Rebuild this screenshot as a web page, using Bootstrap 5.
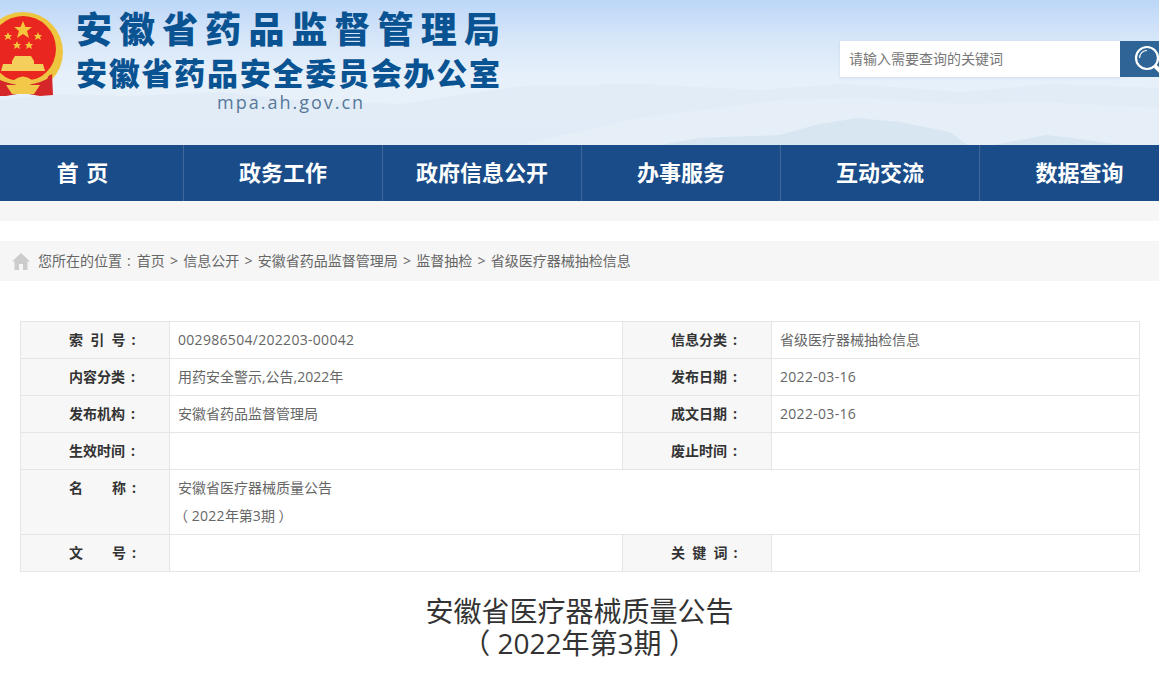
<!DOCTYPE html>
<html lang="zh-CN">
<head>
    <meta charset="UTF-8">
    <meta name="viewport" content="width=device-width, initial-scale=1.0">
    <title>安徽省医疗器械质量公告</title>
    <link href="https://cdn.jsdelivr.net/npm/bootstrap@5.3.0/dist/css/bootstrap.min.css" rel="stylesheet">
    <style>
        html, body { overflow: hidden; height: 675px; }
        body { font-family: "Open Sans", "Noto Sans CJK SC", sans-serif; font-size: 14px; color: #666; background: #fff; }
        .top-head { height: 145px; position: relative; overflow: hidden; background: linear-gradient(180deg, #bcd6f8 0, #d5e5f9 35px, #e6f0fa 75px, #e8f1f9 100px, #e4eef8 145px); }
        .top-hills { position: absolute; left: 0; top: 0; }
        .top-inner { position: relative; height: 145px; }
        .emblem { flex: 0 0 auto; margin-left: -22px; margin-top: 10px; }
        .site-titles { margin-left: 13px; width: 440px; }
        .title-a, .title-b { font-family: "Noto Sans CJK SC", sans-serif; font-weight: 900; color: #0a5392; white-space: nowrap; }
        .title-a { font-size: 36px; letter-spacing: 7.1px; line-height: 40px; margin-top: 7px; }
        .title-b { font-size: 31px; letter-spacing: 1.75px; line-height: 40px; margin-top: 5px; }
        .site-url { font-family: "Open Sans", sans-serif; font-size: 18px; letter-spacing: 2px; line-height: 22px; color: #56789a; margin: -1px 0 0 141px; }
        .search-box { margin: 41px 0 0 auto; width: 319px; height: 36px; flex: 0 0 auto; }
        .search-text { width: 280px; height: 36px; background: #fff; padding-left: 9px; line-height: 36px; color: #777; box-shadow: 0 1px 3px rgba(120,150,190,.2); }
        .search-btn { width: 39px; height: 36px; background: #2f6496; overflow: hidden; }
        .main-nav { background: #1a4c89; height: 56px; margin-left: -15px; width: 1200px; }
        .main-nav a { width: 199px; height: 56px; line-height: 52px; text-align: center; color: #fff; font-family: "Noto Sans CJK SC", sans-serif; font-size: 22px; font-weight: 700; word-spacing: 2.5px; text-decoration: none; border-right: 1px solid #3f6899; }
        .main-nav a:first-child { padding-right: 3px; }
        .main-nav a:last-child { border-right: 0; }
        .strip { height: 20px; background: #f6f6f6; }
        .crumb-bar { height: 40px; margin-top: 20px; background: #f6f6f6; padding: 0 0 0 12px; line-height: 38px; }
        .crumb-bar svg { margin: 0 8px 0 0; }
        .crumb-bar i { font-style: normal; margin: 0 5.25px; }
        .crumb-bar .colon-mark { margin: 0 6px 0 5px; }
        .info-wrap { margin: 40px 20px 0 20px; }
        .info-table { table-layout: fixed; width: 1119px; margin: 0; border-color: #e5e5e5; --bs-table-color: #666; font-size: 14px; }
        .info-table td { padding: 0 8px; height: 37px; vertical-align: middle; line-height: 28px; border-color: #e5e5e5; }
        .info-table td.lab { background: #f7f7f7; color: #333; font-weight: 700; padding: 0 0 0 48px; white-space: pre; --bs-table-bg: #f7f7f7; }
        .info-table td.lab .colon-mark { margin-left: 6px; }
        .info-table tr.tall td { height: 65px; }
        .info-table tr.tall td.lab { vertical-align: top; padding-top: 4px; }
        .paren-in { margin-left: -4px; }
        .num { letter-spacing: .3px; }
        .doc-title { margin: 23px 0 0; text-align: center; font-size: 28px; line-height: 32px; font-weight: 400; color: #333; }
    </style>
</head>
<body>
    <div class="top-head">
        <svg class="top-hills" width="1159" height="145" viewBox="0 0 1159 145">
            <path d="M0 100 L60 94 L130 96 L220 92 L300 100 L400 104 L520 86 L640 84 L760 90 L840 84 L880 86 L960 92 L1050 84 L1159 88 V145 H0Z" fill="#dfeaf6" opacity=".7"/>
            <path d="M520 145 L640 118 L780 100 L860 98 L960 104 L1040 102 L1159 108 V145Z" fill="#e6eff8"/>
            <path d="M660 145 L700 138 L780 135 L815 125 L857 118 L900 122 L950 132 L967 145Z" fill="#d8e6f2"/>
            <path d="M993 145 L1020 140 L1047 135 L1072 138 L1123 145Z" fill="#d8e6f2"/>
        </svg>
        <div class="top-inner d-flex">
            <svg class="emblem" width="85" height="88" viewBox="-22 10 85 88">
                <circle cx="23" cy="52" r="40" fill="#eec53e"/>
                <circle cx="23" cy="49" r="33" fill="#ea2620"/>
                <path d="M23 21 L25.500 27 L32 27 L27 31 L29 38 L23 34 L17 38 L19 31 L14 27 L20.500 27Z" fill="#f5c63c"/>
                <path d="M8 32 L9.200 35 L12 35 L10 37 L11 40 L8 38.200 L5 40 L6 37 L4 35 L6.800 35Z" fill="#f5c63c"/>
                <path d="M38 32 L39.200 35 L42 35 L40 37 L41 40 L38 38.200 L35 40 L36 37 L34 35 L36.800 35Z" fill="#f5c63c"/>
                <path d="M17 41 L18.200 44 L21 44 L19 46 L20 49 L17 47.200 L14 49 L15 46 L13 44 L15.800 44Z" fill="#f5c63c"/>
                <path d="M29 41 L30.200 44 L33 44 L31 46 L32 49 L29 47.200 L26 49 L27 46 L25 44 L27.800 44Z" fill="#f5c63c"/>
                <path d="M12 61 L15 56 H31 L34 61 V64 H43 L45 71 H1 L3 64 H12Z" fill="#f4cf5c"/>
                <path d="M-14 74 L-8 76 Q23 92 52 74 L53 95 L40 96 L23 93 L6 96 L-14 96Z" fill="#d5262a"/>
                <path d="M-6 74 Q23 88 50 73 L47 79 Q23 91 -2 79Z" fill="#efc445"/>
                <path d="M14 80 Q23 73 32 80 L30 85 L40 85 L34 94 H12 L6 85 L16 85Z" fill="#f1c848"/>
            </svg>
            <div class="site-titles">
                <div class="title-a">安徽省药品监督管理局</div>
                <div class="title-b">安徽省药品安全委员会办公室</div>
                <div class="site-url">mpa.ah.gov.cn</div>
            </div>
            <div class="search-box d-flex">
                <div class="search-text">请输入需要查询的关键词</div>
                <div class="search-btn">
                    <svg width="39" height="36" viewBox="0 0 39 36">
                        <circle cx="27" cy="17" r="11" fill="none" stroke="#fff" stroke-width="2.200"/>
                        <path d="M19.500 17 A7.500 7.500 0 0 1 27 9.500" fill="none" stroke="#fff" stroke-width="1.200"/>
                        <path d="M35 25 L42 32" stroke="#fff" stroke-width="4"/>
                    </svg>
                </div>
            </div>
        </div>
    </div>

    <nav class="main-nav d-flex">
        <a href="#">首 页</a>
        <a href="#">政务工作</a>
        <a href="#">政府信息公开</a>
        <a href="#">办事服务</a>
        <a href="#">互动交流</a>
        <a href="#">数据查询</a>
    </nav>
    <div class="strip"></div>

    <div class="crumb-bar d-flex align-items-center">
        <svg width="18" height="17" viewBox="0 0 18 17"><path d="M9 0 L18 8.500 H15.500 V17 H11 V11 H7 V17 H2.500 V8.500 H0Z" fill="#ccc"/></svg>
        <span>您所在的位置<span class="colon-mark">:</span>首页<i>&gt;</i>信息公开<i>&gt;</i>安徽省药品监督管理局<i>&gt;</i>监督抽检<i>&gt;</i>省级医疗器械抽检信息</span>
    </div>

    <div class="info-wrap">
        <table class="table table-bordered info-table">
            <colgroup><col style="width:149px"><col style="width:453px"><col style="width:149px"><col style="width:368px"></colgroup>
            <tr>
                <td class="lab">索  引  号<span class="colon-mark">:</span></td><td class="num">002986504/202203-00042</td>
                <td class="lab">信息分类<span class="colon-mark">:</span></td><td>省级医疗器械抽检信息</td>
            </tr>
            <tr>
                <td class="lab">内容分类<span class="colon-mark">:</span></td><td>用药安全警示,公告,2022年</td>
                <td class="lab">发布日期<span class="colon-mark">:</span></td><td class="num">2022-03-16</td>
            </tr>
            <tr>
                <td class="lab">发布机构<span class="colon-mark">:</span></td><td>安徽省药品监督管理局</td>
                <td class="lab">成文日期<span class="colon-mark">:</span></td><td class="num">2022-03-16</td>
            </tr>
            <tr>
                <td class="lab">生效时间<span class="colon-mark">:</span></td><td></td>
                <td class="lab">废止时间<span class="colon-mark">:</span></td><td></td>
            </tr>
            <tr class="tall">
                <td class="lab">名        称<span class="colon-mark">:</span></td>
                <td colspan="3">安徽省医疗器械质量公告<br><span class="paren-in">（</span> <span class="num">2022</span>年第3期 ）</td>
            </tr>
            <tr>
                <td class="lab">文        号<span class="colon-mark">:</span></td><td></td>
                <td class="lab">关  键  词<span class="colon-mark">:</span></td><td></td>
            </tr>
        </table>
    </div>

    <h1 class="doc-title">安徽省医疗器械质量公告<br>（ 2022年第3期 ）</h1>

    <script src="https://cdn.jsdelivr.net/npm/bootstrap@5.3.0/dist/js/bootstrap.bundle.min.js"></script>
</body>
</html>
